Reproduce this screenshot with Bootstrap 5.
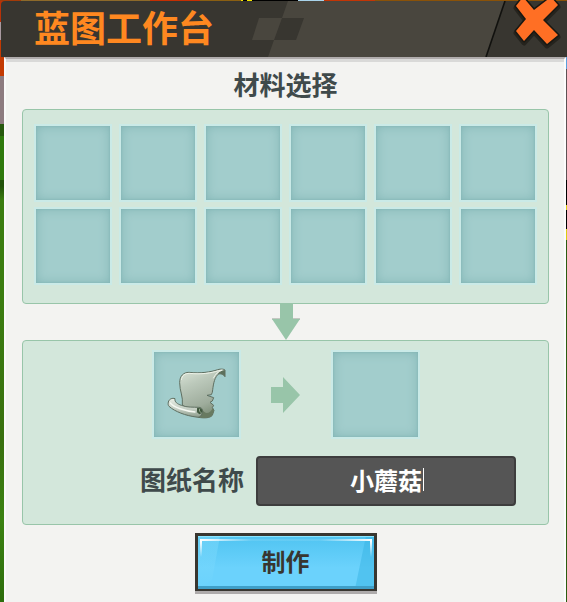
<!DOCTYPE html>
<html lang="zh-CN">
<head>
<meta charset="utf-8">
<meta name="viewport" content="width=device-width, initial-scale=1">
<title>蓝图工作台</title>
<link href="https://cdn.jsdelivr.net/npm/bootstrap@5.3.0/dist/css/bootstrap.min.css" rel="stylesheet">
<style>
  html { height: 100%; }
  body {
    min-height: 100%;
    font-family: "Noto Sans CJK SC", sans-serif;
    color: #3f4a4b;
    background:
      linear-gradient(90deg, #a33b08 0 21px, #8d6a2a 21px 150px, #c62f02 150px 200px, #8a5f12 200px 241px, #f3e600 241px 243px, #000 243px 247px, #f3e600 247px 252px, #000 252px 298px, #a9d3ea 298px 324px, #c33505 324px 375px, #8a5208 375px) top / 100% 1px no-repeat,
      linear-gradient(#5a9fdc 0 69px, #5c5253 69px 180px, #000 180px 205px, #d9cc10 205px 210px, #000 210px 229px, #d9cc10 229px 240px, #2c5c10 240px) right top / 3px 100% no-repeat,
      linear-gradient(#b83208 0 22px, #a99aa0 22px 40px, #c33a02 40px 76px, #8d7b80 76px 124px, #27590f 124px 136px, #2f7a0e 136px 180px, #22520b 180px 186px, #3b7d11 200px 300px, #397010 440px, #3b8212 520px, #2d6d0d 100%);
  }
  .craft-window { margin: 0 1px 0 4px; padding-top: 1px; min-height: 100vh; }
  .craft-head {
    height: 56px;
    margin: 0 -1px 0 -3px;
    padding-left: 33px;
    border-radius: 4px 0 0 0;
    background: #383630;
  }
  .craft-title { font-size: 36px; line-height: 50px; font-weight: 700; color: #ff8820; }
  .head-art { inset: 0; width: 566px; height: 56px; }
  .close-x { right: 5px; top: -3px; width: 50px; height: 56px; }
  .craft-body {
    background: #f3f3f1;
    border-top: 2px solid #b0acac;
    border-left: 2px solid #fafafa;
    border-right: 2px solid #fcfcfc;
    padding: 0 15px 8px 16px;
    box-shadow: inset 0 3px #d9d9d8;
  }
  .section-title { font-size: 26px; line-height: 30px; font-weight: 700; padding: 10px 0; }
  .tray { background: #d3e7db; border: 1px solid #98c5a9; border-radius: 4px; }
  .tray-materials { padding: 14px 11px 18px; }
  .slot-grid { display: grid; grid-template-columns: repeat(6, 1fr); gap: 5px 7px; }
  .slot {
    aspect-ratio: 1;
    border: 2px solid #caeae7;
    background: #a2cdcc;
    box-shadow: inset 0 0 11px #82b5b5, inset 0 0 2px #7bb0b0;
  }
  .slot-lg { width: 89px; }
  .arrow-down { width: 28px; height: 36px; }
  .arrow-right { width: 29px; height: 36px; margin: 0 31px 0 30px; }
  .tray-result { padding: 9px 32px 18px; }
  .name-row { margin-top: 17px; gap: 12px; }
  .name-label { font-size: 26px; line-height: 46px; height: 50px; font-weight: 700; white-space: nowrap; }
  .name-input, .name-input:focus {
    width: 260px;
    height: 50px;
    padding: 0 4px 4px;
    border: 2px solid #3d3d3d;
    border-radius: 4px;
    color: #fff;
    font-size: 24px;
    font-weight: 700;
    text-align: center;
    background: linear-gradient(#fff, #fff) calc(50% + 37px) 10px / 1px 23px no-repeat #555;
    box-shadow: none;
  }
  .make-btn {
    width: 182px;
    height: 58px;
    margin-top: 8px;
    padding: 0 0 3px;
    border: 3px solid #383630;
    border-bottom-width: 2px;
    border-radius: 0;
    color: #383630;
    font-size: 24px;
    line-height: 50px;
    font-weight: 700;
    background: linear-gradient(#50c4f1, #6bd2fc 60%, #6bd2fc);
    box-shadow: 0 3px #aeabab;
  }
  .btn-art { inset: 0; width: 100%; height: 100%; }
</style>
</head>
<body>
<main class="craft-window d-flex flex-column">
  <header class="craft-head position-relative d-flex align-items-start">
    <svg class="head-art position-absolute" viewBox="0 0 566 56" aria-hidden="true">
      <path d="M287 0H566V56H267L273 39H295L303 17H281Z" fill="#49463e"/>
      <path d="M258 17H281L273 39H251Z" fill="#49463e"/>
      <path d="M504 0H566V56H485Z" fill="#383630"/>
      <path d="M504 0L485 56" stroke="#11110e" stroke-width="1.6"/>
    </svg>
    <h1 class="craft-title position-relative m-0">蓝图工作台</h1>
    <button class="close-x btn position-absolute border-0 p-0" type="button" aria-label="关闭">
      <svg class="d-block" width="50" height="56" viewBox="0 0 50 56" aria-hidden="true">
        <path d="M4 8L11 -1L22 12L39 -1L46 7L31 22L46 37L35 46L22 32L12 43L4 33L14 21Z" transform="translate(0 2)" fill="#191812" stroke="#191812" stroke-width="5" stroke-linejoin="round" opacity=".6"/>
        <path d="M4 8L11 -1L22 12L39 -1L46 7L31 22L46 37L35 46L22 32L12 43L4 33L14 21Z" fill="#191812" stroke="#191812" stroke-width="3" stroke-linejoin="round"/>
        <path d="M4 8L11 -1L22 12L39 -1L46 7L31 22L46 37L35 46L22 32L12 43L4 33L14 21Z" fill="#ff6f24"/>
      </svg>
    </button>
  </header>
  <div class="craft-body flex-grow-1">
    <h2 class="section-title text-center m-0">材料选择</h2>
    <section class="tray tray-materials" aria-label="材料">
      <div class="slot-grid">
        <div class="slot"></div><div class="slot"></div><div class="slot"></div>
        <div class="slot"></div><div class="slot"></div><div class="slot"></div>
        <div class="slot"></div><div class="slot"></div><div class="slot"></div>
        <div class="slot"></div><div class="slot"></div><div class="slot"></div>
      </div>
    </section>
    <svg class="arrow-down d-block mx-auto" viewBox="0 0 28 36" aria-hidden="true">
      <path d="M0 15H28" stroke="#b5b9b2" stroke-width="1.5"/>
      <path d="M8 0H21V15H28L14 36L0 15H8Z" fill="#98c5a9"/>
    </svg>
    <section class="tray tray-result" aria-label="图纸">
      <div class="d-flex justify-content-center align-items-center">
        <div class="slot slot-lg">
          <svg class="d-block w-100 h-100" viewBox="42 186 255 255" aria-hidden="true">
            <defs>
              <linearGradient id="sheet" x1="0" y1="0" x2=".4" y2="1">
                <stop offset="0" stop-color="#dde6da"/><stop offset=".35" stop-color="#bcc9bb"/><stop offset=".8" stop-color="#9eac9c"/><stop offset="1" stop-color="#82937e"/>
              </linearGradient>
              <linearGradient id="roll" x1="0" y1="0" x2="0" y2="1">
                <stop offset="0" stop-color="#e9efe6"/><stop offset=".6" stop-color="#c2ccc1"/><stop offset="1" stop-color="#8a9a8a"/>
              </linearGradient>
            </defs>
            <path d="M127 345C130 320 119 304 119 278C119 258 130 247 147 247C180 251 213 246 233 239C243 236 251 237 255 240V260C249 252 239 249 233 254C221 268 220 286 217 307L214 314L201 316L221 323L217 333L210 337L221 346L217 353L222 361L217 376C210 384 195 385 175 382Z" fill="url(#sheet)" stroke="#5f6f61" stroke-width="3" stroke-linejoin="round"/>
            <path d="M233 254C237 244 246 241 255 241V260C249 252 239 249 233 254Z" fill="#5d705c"/>
            <path d="M124 270C126 256 135 250 149 250C183 254 215 249 236 242L247 240C235 244 226 252 220 265" fill="none" stroke="#eef3e9" stroke-width="3"/>
            <path d="M187 358C195 375 210 371 219 354L222 363L215 378C205 385 188 385 175 381Z" fill="#687a61"/>
            <path d="M85 336C87 327 97 323 105 326C103 336 112 342 124 346C142 353 160 351 176 352C187 352 190 361 186 370C182 381 178 383 168 381C137 377 105 365 87 349C84 346 84 341 85 336Z" fill="url(#roll)" stroke="#5f6f61" stroke-width="3" stroke-linejoin="round"/>
            <path d="M91 339C100 352 136 363 165 366" fill="none" stroke="#f5f8f2" stroke-width="4" stroke-linecap="round"/>
            <path d="M171 355C182 350 190 359 186 369L178 373L171 367Z" fill="#41593f"/>
            <path d="M179 356C177 362 179 366 185 369" fill="none" stroke="#94a58e" stroke-width="3"/>
          </svg>
        </div>
        <svg class="arrow-right" viewBox="0 0 29 36" aria-hidden="true"><path d="M0 10H12V0L29 18L12 36V26H0Z" fill="#98c5a9"/></svg>
        <div class="slot slot-lg"></div>
      </div>
      <div class="name-row d-flex justify-content-end align-items-start">
        <label class="name-label" for="blueprint-name">图纸名称</label>
        <input class="name-input form-control" id="blueprint-name" type="text" value="小蘑菇">
      </div>
    </section>
    <button class="make-btn btn position-relative d-block mx-auto" type="button">
      <svg class="btn-art position-absolute" viewBox="0 0 176 53" preserveAspectRatio="none" aria-hidden="true">
        <defs>
          <linearGradient id="shine" x1="0" y1="0" x2="1" y2="0">
            <stop offset="0" stop-color="#fff"/><stop offset=".3" stop-color="#fff" stop-opacity=".1"/><stop offset=".7" stop-color="#fff" stop-opacity=".1"/><stop offset="1" stop-color="#fff"/>
          </linearGradient>
          <linearGradient id="shine-side" x1="0" y1="0" x2="0" y2="1">
            <stop offset="0" stop-color="#fff"/><stop offset="1" stop-color="#fff" stop-opacity="0"/>
          </linearGradient>
          <linearGradient id="pane" x1="0" y1="0" x2="0" y2="1">
            <stop offset="0" stop-color="#8fe2ff" stop-opacity=".4"/><stop offset="1" stop-color="#8fe2ff" stop-opacity="0"/>
          </linearGradient>
        </defs>
        <path d="M0 0H22L14 44L0 53Z" fill="url(#pane)"/>
        <path d="M168 0H176V53H157Z" fill="#37b3e3" opacity=".5"/>
        <path d="M0 .5H176" stroke="#8be6ff"/>
        <path d="M0 51.500H176" stroke="#3f9fc8" stroke-width="3"/>
        <rect x="2" y="3" width="172" height="2" fill="url(#shine)"/>
        <rect x="2" y="5" width="2" height="16" fill="url(#shine-side)"/>
        <rect x="172" y="5" width="2" height="16" fill="url(#shine-side)"/>
      </svg>
      <span class="position-relative">制作</span>
    </button>
  </div>
</main>
<script src="https://cdn.jsdelivr.net/npm/bootstrap@5.3.0/dist/js/bootstrap.bundle.min.js"></script>
</body>
</html>
